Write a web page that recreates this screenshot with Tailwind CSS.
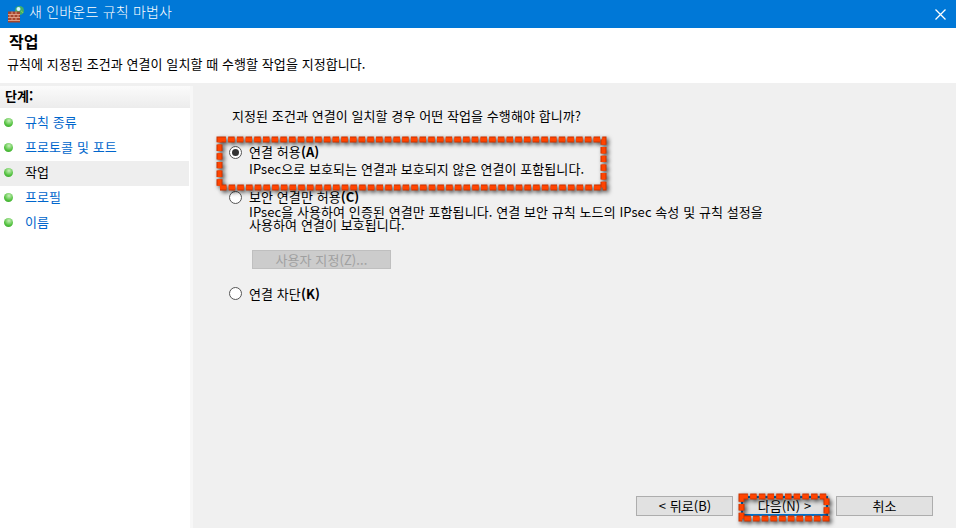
<!doctype html>
<html lang="ko"><head><meta charset="utf-8"><script src="https://cdn.jsdelivr.net/npm/@tailwindcss/browser@4"></script></head>
<body class="m-0">
<div class="relative w-[956px] h-[528px] overflow-hidden flex flex-col bg-white text-[13px] leading-[13px] tracking-[0.08px] text-black font-['Noto_Sans_CJK_KR','Noto_Sans',sans-serif]">
  <div class="h-[28px] shrink-0 bg-[#0078d7] flex items-center pl-[7px] pr-[10px] text-white">
    <svg width="18" height="17" viewBox="0 0 18 17" class="shrink-0"><circle cx="12.5" cy="4.5" r="4.5" fill="#3fae6a"/><circle cx="11.5" cy="3" r="2" fill="#d5f0ff"/><path d="M14 5a3 3 0 0 1 2 2" stroke="#8fd05a" fill="none"/><rect x="1" y="5.5" width="12" height="11" fill="#a5452c"/><path d="M1 8.5h12M1 11.5h12M1 14.5h12M5 5.5v3M9 5.5v3M3 8.5v3M7 8.5v3M11 8.5v3M5 11.5v3M9 11.5v3" stroke="#dd9d85" stroke-width="1"/></svg>
    <span class="ml-[4px] text-[14px] tracking-[0.2px] font-light -mt-[5px]">새 인바운드 규칙 마법사</span>
    <svg width="11" height="11" viewBox="0 0 11 11" class="ml-auto"><path d="M.5.5l10 10M10.5.5l-10 10" stroke="#fff" stroke-width="1.3"/></svg>
  </div>
  <div class="h-[55px] shrink-0 bg-white pl-[7px] pt-[3px]">
    <div class="text-[16px] leading-[20px] font-bold pl-[2px]">작업</div>
    <div class="mt-[6px] leading-[14px]">규칙에 지정된 조건과 연결이 일치할 때 수행할 작업을 지정합니다.</div>
  </div>
  <div class="h-[3px] shrink-0 bg-[#f0f0f0]"></div>
  <div class="flex-1 flex bg-white">
    <div class="w-[190px] shrink-0 bg-white">
      <div class="h-[22px] pl-[5px] pt-[2px] font-bold leading-[16px] bg-gradient-to-b from-[#fbfbfb] to-[#ececec]">단계:</div>
      <div class="h-[3px]"></div>
      <div class="h-[25px] flex items-center text-[#0066cc]"><span class="w-[9px] h-[9px] ml-[4px] -mt-[3px] rounded-full bg-[radial-gradient(circle_at_55%_30%,#c8f0b8,#4fc03c_60%,#3a9a30)]"></span><span class="ml-[12px] -mt-[5px]">규칙 종류</span></div>
      <div class="h-[25px] flex items-center text-[#0066cc]"><span class="w-[9px] h-[9px] ml-[4px] -mt-[3px] rounded-full bg-[radial-gradient(circle_at_55%_30%,#c8f0b8,#4fc03c_60%,#3a9a30)]"></span><span class="ml-[12px] -mt-[5px]">프로토콜 및 포트</span></div>
      <div class="h-[25px] mr-[1px] flex items-center bg-[#eeeeee]"><span class="w-[9px] h-[9px] ml-[4px] -mt-[3px] rounded-full bg-[radial-gradient(circle_at_55%_30%,#c8f0b8,#4fc03c_60%,#3a9a30)]"></span><span class="ml-[12px] -mt-[5px]">작업</span></div>
      <div class="h-[25px] flex items-center text-[#0066cc]"><span class="w-[9px] h-[9px] ml-[4px] -mt-[3px] rounded-full bg-[radial-gradient(circle_at_55%_30%,#c8f0b8,#4fc03c_60%,#3a9a30)]"></span><span class="ml-[12px] -mt-[5px]">프로필</span></div>
      <div class="h-[25px] flex items-center text-[#0066cc]"><span class="w-[9px] h-[9px] ml-[4px] -mt-[3px] rounded-full bg-[radial-gradient(circle_at_55%_30%,#c8f0b8,#4fc03c_60%,#3a9a30)]"></span><span class="ml-[12px] -mt-[5px]">이름</span></div>
    </div>
    <div class="w-[3px] shrink-0 bg-[#f7f7f7]"></div>
    <div class="flex-1 bg-[#f0f0f0] pl-[36px] pr-[23px] pt-[23px] flex flex-col">
      <div class="leading-[14px] pl-[3px]">지정된 조건과 연결이 일치할 경우 어떤 작업을 수행해야 합니까?</div>
      <div class="mt-[22px] flex items-start">
        <span class="w-[13px] h-[13px] mt-[1px] rounded-full border border-[#555] bg-white flex items-center justify-center shrink-0"><span class="w-[7px] h-[7px] rounded-full bg-[#333]"></span></span>
        <div class="ml-[7px]"><div class="leading-[14px]">연결 허용<b>(A)</b></div><div class="mt-[3px] leading-[14px]">IPsec으로 보호되는 연결과 보호되지 않은 연결이 포함됩니다.</div></div>
      </div>
      <div class="mt-[14px] flex items-start">
        <span class="w-[13px] h-[13px] mt-[1px] rounded-full border border-[#555] bg-white shrink-0"></span>
        <div class="ml-[7px]"><div class="leading-[14px]">보안 연결만 허용<b>(C)</b></div><div class="mt-[1px] leading-[13px] w-[522px] break-keep">IPsec을 사용하여 인증된 연결만 포함됩니다. 연결 보안 규칙 노드의 IPsec 속성 및 규칙 설정을 사용하여 연결이 보호됩니다.</div></div>
      </div>
      <div class="mt-[19px] ml-[23px] w-[139px] h-[19px] bg-[#cccccc] border border-[#bfbfbf] text-[#a0a0a0] flex items-center justify-center">사용자 지정(Z)...</div>
      <div class="mt-[18px] flex items-center">
        <span class="w-[13px] h-[13px] rounded-full border border-[#555] bg-white shrink-0"></span>
        <span class="ml-[7px]">연결 차단<b>(K)</b></span>
      </div>
      <div class="mt-auto mb-[12px] flex justify-end gap-[7px]">
        <div class="w-[97px] h-[20px] bg-[#e1e1e1] border border-[#adadad] flex items-center justify-center pb-[2px] pl-[1px]">&lt; 뒤로(B)</div>
        <div class="w-[87px] h-[20px] mx-[1px] bg-[#e1e1e1] border-2 border-[#0078d7] flex items-center justify-center pb-[2px]">다음(N) &gt;</div>
        <div class="w-[97px] h-[20px] bg-[#e1e1e1] border border-[#adadad] flex items-center justify-center pb-[2px]">취소</div>
      </div>
    </div>
  </div>
  <svg class="absolute left-[214px] top-[134px] drop-shadow-[2px_2px_2px_rgba(0,0,0,0.7)]" width="396" height="60"><rect x="5.5" y="5.5" width="384" height="48" fill="none" stroke="#c93200" stroke-width="6" stroke-dasharray="6.4 2.3"/><rect x="5.5" y="5.5" width="384" height="48" fill="none" stroke="#ff4400" stroke-width="4" stroke-dasharray="6.4 2.3"/></svg>
  <svg class="absolute left-[736px] top-[491px] drop-shadow-[2px_2px_2px_rgba(0,0,0,0.7)]" width="98" height="34"><rect x="5.5" y="5.5" width="85" height="22" fill="none" stroke="#c93200" stroke-width="6" stroke-dasharray="6.4 2.3"/><rect x="5.5" y="5.5" width="85" height="22" fill="none" stroke="#ff4400" stroke-width="4" stroke-dasharray="6.4 2.3"/></svg>
</div>
</body></html>
